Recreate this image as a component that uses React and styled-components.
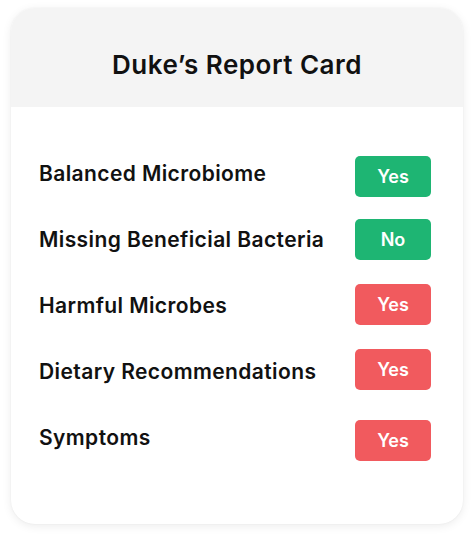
import React from "react";
import styled, { createGlobalStyle } from "styled-components";

const Global = createGlobalStyle`
  html, body { margin: 0; padding: 0; background: #ffffff; }
  body { font-family: Inter, "Noto Sans", Arial, sans-serif; }
`;

const Page = styled.div`
  width: 474px;
  height: 537px;
  padding: 8px 11px 13px 11px;
  box-sizing: border-box;
`;

const Card = styled.section`
  height: 516px;
  border-radius: 24px;
  background: #fff;
  box-shadow: 0 2px 10px rgba(0, 0, 0, 0.08), 0 0 2px rgba(0, 0, 0, 0.05);
  overflow: hidden;
  display: flex;
  flex-direction: column;
`;

const Header = styled.header`
  height: 99px;
  box-sizing: border-box;
  padding-top: 14px;
  background: #f4f4f4;
  display: flex;
  align-items: center;
  justify-content: center;
`;

const Title = styled.h1`
  margin: 0;
  font-size: 26px;
  font-weight: 600;
  color: #111;
  letter-spacing: 0.5px;
`;

const List = styled.div`
  display: flex;
  flex-direction: column;
  padding: 33px 32px 0 28px;
`;

const Row = styled.div`
  display: flex;
  align-items: center;
  justify-content: space-between;
  height: 66px;
`;

const Label = styled.span`
  font-size: 21px;
  font-weight: 600;
  color: #111;
  letter-spacing: 0.4px;
`;

const Badge = styled.span`
  width: 76px;
  height: 41px;
  border-radius: 5px;
  display: flex;
  align-items: center;
  justify-content: center;
  font-size: 18px;
  font-weight: 600;
  color: #fff;
  margin-top: ${(p) => p.$shift * 2}px;
  background: ${(p) => (p.$tone === "good" ? "#1eb573" : "#f15a5e")};
`;

const rows = [
  ["Balanced Microbiome", "Yes", "good", 3],
  ["Missing Beneficial Bacteria", "No", "good", 0],
  ["Harmful Microbes", "Yes", "bad", -1],
  ["Dietary Recommendations", "Yes", "bad", -2],
  ["Symptoms", "Yes", "bad", 3],
];

export default function App() {
  return (
    <>
      <Global />
      <Page>
        <Card>
          <Header>
            <Title>Duke’s Report Card</Title>
          </Header>
          <List>
            {rows.map(([label, value, tone, shift]) => (
              <Row key={label}>
                <Label>{label}</Label>
                <Badge $tone={tone} $shift={shift}>
                  {value}
                </Badge>
              </Row>
            ))}
          </List>
        </Card>
      </Page>
    </>
  );
}
